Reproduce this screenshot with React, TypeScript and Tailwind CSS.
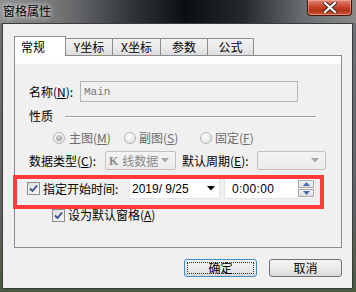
import React from 'react';

const cjk = "font-['SimSun','Noto_Sans_CJK_SC',sans-serif]";

function Check() {
    return (
        <span className="flex h-[13px] w-[13px] items-center justify-center border border-[#8f8f8f] bg-[linear-gradient(135deg,#dcdcdc,#fbfbfb)]">
            <svg width="9" height="9" viewBox="0 0 9 9">
                <path
                    d="M1 4.5 L3.5 7 L8 1.5"
                    fill="none"
                    stroke="#3a4f8c"
                    strokeWidth="1.8"
                />
            </svg>
        </span>
    );
}

function Radio({ on }: { on?: boolean }) {
    return (
        <span className="flex h-[12px] w-[12px] items-center justify-center rounded-full border border-[#b8b8b8] bg-[radial-gradient(circle_at_40%_35%,#ffffff,#dadada)]">
            {on && (
                <span className="h-[6px] w-[6px] rounded-full bg-[radial-gradient(circle_at_40%_35%,#d8d8d8,#8e8e8e)]" />
            )}
        </span>
    );
}

function Combo({ width, text }: { width: string; text?: React.ReactNode }) {
    return (
        <div
            className={`flex h-[19px] ${width} items-center justify-between rounded-[2px] border border-[#c2c2c2] bg-[linear-gradient(#f4f4f4,#ebebeb)] pl-[3px] pr-[6px] text-[#8a8a8a]`}
        >
            <span className="flex items-center gap-[4px]">{text}</span>
            <svg width="8" height="5" viewBox="0 0 8 5">
                <path d="M0 0 H8 L4 4.5 Z" fill="#a8a8a8" />
            </svg>
        </div>
    );
}

function Tab({ label, w, active }: { label: React.ReactNode; w: string; active?: boolean }) {
    if (active)
        return (
            <div
                className={`relative z-10 -mb-px flex h-[20px] ${w} items-start border border-b-0 border-[#898c95] bg-white pl-[6px] pt-[2px]`}
            >
                {label}
            </div>
        );
    return (
        <div
            className={`-ml-px flex h-[17px] ${w} items-center justify-center border border-b-0 border-[#898c95] bg-[linear-gradient(#f2f2f2,#ebebeb_50%,#dcdcdc)]`}
        >
            {label}
        </div>
    );
}

export default function App() {
    return (
        <div
            className={`relative flex h-[292px] w-[356px] flex-col overflow-hidden bg-[linear-gradient(90deg,#8d8f90_0%,#6f7173_18%,#2e3135_38%,#0b0e13_52%,#24272b_68%,#6a6d6f_85%,#868889_100%)] text-[12px] leading-[16px] text-black ${cjk}`}
        >
            {/* title bar */}
            <div className="flex h-[23px] shrink-0 items-start justify-between">
                <span className="ml-[3px] mt-[4px] text-[12px] leading-[14px] [text-shadow:0_0_4px_#f0f0f0,0_0_6px_#d8d8d8]">
                    窗格属性
                </span>
                <div className="mr-[4px] flex h-[16px] w-[45px] items-center justify-center rounded-b-[4px] border border-t-0 border-[#4a1208] bg-[linear-gradient(#e0877a,#c8452b_45%,#b33317_70%,#c85a3a)] shadow-[inset_0_0_0_1px_rgba(255,200,180,0.45)]">
                    <svg width="14" height="11" viewBox="0 0 14 11">
                        <path
                            d="M2 1 L12 10 M12 1 L2 10"
                            stroke="#3b2a2a"
                            strokeWidth="4"
                            strokeLinecap="square"
                        />
                        <path
                            d="M2 1 L12 10 M12 1 L2 10"
                            stroke="#ffffff"
                            strokeWidth="2.2"
                            strokeLinecap="square"
                        />
                    </svg>
                </div>
            </div>

            {/* client */}
            <div className="flex flex-1 pb-[3px] pl-[2px] pr-[3px] bg-[linear-gradient(#6f7274,#5e6163_70%,#4b5a3c)]">
                <div className="flex flex-1 flex-col border border-[#3b3b3b] bg-[#f0f0f0] pl-[11px] pr-[10px] pt-[12px]">
                    <div className="flex items-end pl-0">
                        <Tab active w="w-[52px]" label="常规" />
                        <Tab w="w-[48px]" label="Y坐标" />
                        <Tab w="w-[49px]" label="X坐标" />
                        <Tab w="w-[48px]" label="参数" />
                        <Tab w="w-[47px]" label="公式" />
                    </div>

                    <div className="relative flex h-[193px] w-[328px] flex-col border border-[#898c95] bg-[linear-gradient(#ffffff,#ffffff_7px,#f0f0f0_9px)] pl-[14px]">
                        <div className="mt-[25px] flex h-[21px] items-center">
                            <span className="w-[51px]">
                                名称(<u>N</u>):
                            </span>
                            <div className="flex h-[21px] w-[218px] items-center border border-[#b5b5b5] bg-[#f0f0f0] pl-[3px] font-['Liberation_Mono',monospace] text-[11px] text-[#7a7a7a]">
                                Main
                            </div>
                        </div>

                        <div className="mt-[6px] flex h-[16px] items-center">
                            <span className="w-[36px]">性质</span>
                            <div className="h-px w-[251px] bg-[#a0a0a0] shadow-[0_1px_0_#ffffff]" />
                        </div>

                        <div className="mt-[6px] flex h-[15px] items-center pl-[24px] text-[#6d6d6d]">
                            <Radio on />
                            <span className="ml-[4px] w-[55px]">
                                主图(<u>M</u>)
                            </span>
                            <Radio />
                            <span className="ml-[3px] w-[61px]">
                                副图(<u>S</u>)
                            </span>
                            <Radio />
                            <span className="ml-[3px]">
                                固定(<u>F</u>)
                            </span>
                        </div>

                        <div className="mt-[6px] flex h-[19px] items-center">
                            <span className="w-[76px]">
                                数据类型(<u>C</u>):
                            </span>
                            <Combo
                                width="w-[71px]"
                                text={
                                    <>
                                        <b className="font-['Liberation_Serif',serif] text-[12px]">K</b>
                                        <span>线数据</span>
                                    </>
                                }
                            />
                            <span className="ml-[6px] w-[75px]">
                                默认周期(<u>E</u>):
                            </span>
                            <Combo width="w-[69px]" />
                        </div>

                        <div className="-ml-[2px] mt-[8px] flex h-[21px] items-center">
                            <Check />
                            <span className="ml-[3px] w-[86px]">指定开始时间:</span>
                            <div className="flex h-[21px] w-[91px] items-center justify-between border border-[#e2e6ea] bg-white pl-[2px] pr-[4px] font-['Liberation_Sans',sans-serif] text-[12px]">
                                <span>2019/ 9/25</span>
                                <svg width="8" height="5" viewBox="0 0 8 5">
                                    <path d="M0 0 H8 L4 4.5 Z" fill="#000" />
                                </svg>
                            </div>
                            <div className="ml-[4px] flex h-[21px] w-[92px] items-center justify-between border border-[#e2e6ea] bg-white pl-[7px] pr-[1px] font-['Liberation_Sans',sans-serif] text-[12px] tracking-[0.3px]">
                                <span>0:00:00</span>
                                <div className="flex flex-col gap-[1px]">
                                    <div className="flex h-[8px] w-[16px] items-center justify-center border border-[#a9a9a9] bg-[linear-gradient(#f6f6f6,#dedede)]">
                                        <svg width="7" height="4" viewBox="0 0 7 4">
                                            <path d="M0 4 H7 L3.5 0 Z" fill="#4b6db0" />
                                        </svg>
                                    </div>
                                    <div className="flex h-[8px] w-[16px] items-center justify-center border border-[#a9a9a9] bg-[linear-gradient(#f6f6f6,#dedede)]">
                                        <svg width="7" height="4" viewBox="0 0 7 4">
                                            <path d="M0 0 H7 L3.5 4 Z" fill="#4b6db0" />
                                        </svg>
                                    </div>
                                </div>
                            </div>
                        </div>

                        <div className="mt-[9px] flex h-[14px] items-center pl-[23px]">
                            <Check />
                            <span className="ml-[3px]">
                                设为默认窗格(<u>A</u>)
                            </span>
                        </div>
                    </div>

                    <div className="mt-[11px] flex w-[328px] justify-end gap-[12px]">
                        <button className="flex h-[18px] w-[73px] items-center justify-center rounded-[3px] border border-[#3c8ec6] bg-[linear-gradient(#f3f3f3,#ebebeb_50%,#d9d9d9)] p-[2px]">
                            <span className="flex h-full w-full items-center justify-center border border-dotted border-[#333]">
                                确定
                            </span>
                        </button>
                        <button className="flex h-[18px] w-[73px] items-center justify-center rounded-[3px] border border-[#707070] bg-[linear-gradient(#f3f3f3,#ebebeb_50%,#d9d9d9)]">
                            取消
                        </button>
                    </div>
                </div>
            </div>

            {/* annotation */}
            <div className="pointer-events-none absolute left-[13px] top-[175px] h-[34px] w-[311px] border-[4px] border-[#ff3b3b]" />
        </div>
    );
}
